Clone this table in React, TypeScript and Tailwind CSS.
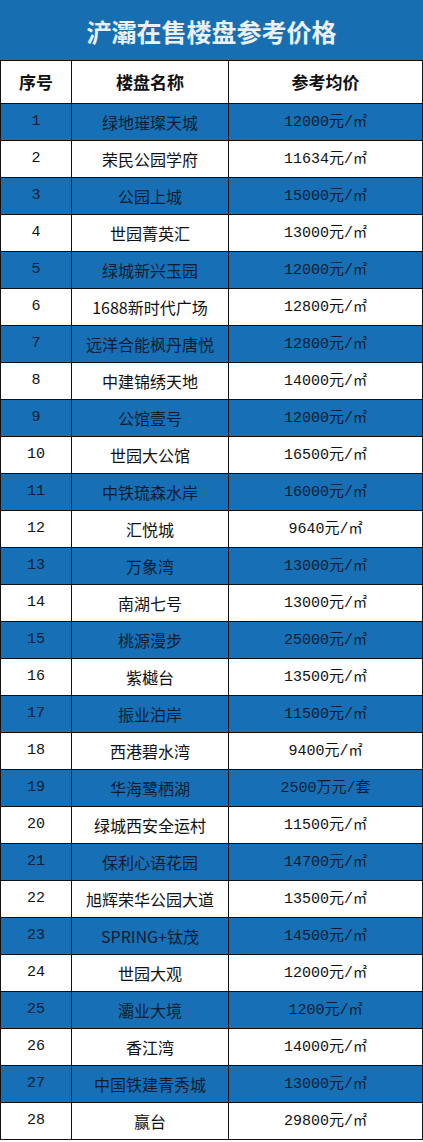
import React from "react";

type Row = [string, string, string];

const rows: Row[] = [
  ["1", "绿地璀璨天城", "12000"],
  ["2", "荣民公园学府", "11634"],
  ["3", "公园上城", "15000"],
  ["4", "世园菁英汇", "13000"],
  ["5", "绿城新兴玉园", "12000"],
  ["6", "1688新时代广场", "12800"],
  ["7", "远洋合能枫丹唐悦", "12800"],
  ["8", "中建锦绣天地", "14000"],
  ["9", "公馆壹号", "12000"],
  ["10", "世园大公馆", "16500"],
  ["11", "中铁琉森水岸", "16000"],
  ["12", "汇悦城", "9640"],
  ["13", "万象湾", "13000"],
  ["14", "南湖七号", "13000"],
  ["15", "桃源漫步", "25000"],
  ["16", "紫樾台", "13500"],
  ["17", "振业泊岸", "11500"],
  ["18", "西港碧水湾", "9400"],
  ["19", "华海鹭栖湖", "SET"],
  ["20", "绿城西安全运村", "11500"],
  ["21", "保利心语花园", "14700"],
  ["22", "旭辉荣华公园大道", "13500"],
  ["23", "SPRING+钛茂", "14500"],
  ["24", "世园大观", "12000"],
  ["25", "灞业大境", "1200"],
  ["26", "香江湾", "14000"],
  ["27", "中国铁建青秀城", "13000"],
  ["28", "赢台", "29800"],
];

const mono = "font-['Liberation_Mono','Noto_Sans_CJK_SC',monospace]";
const cjk = "font-['Noto_Sans_CJK_SC',sans-serif]";

function Price({ v }: { v: string }) {
  if (v === "SET") {
    return (
      <span className="inline-flex items-baseline">
        <span className={`${mono} text-[15px]`}>2500</span>
        <span className={`${cjk} text-[15px]`}>万元</span>
        <span className={`${mono} text-[15px]`}>/</span>
        <span className={`${cjk} text-[15px]`}>套</span>
      </span>
    );
  }
  return (
    <span className="inline-flex items-baseline">
      <span className={`${mono} text-[15px]`}>{v}</span>
      <span className={`${cjk} text-[15px]`}>元</span>
      <span className={`${mono} text-[15px]`}>/</span>
      <span className={`${cjk} text-[14px]`}>㎡</span>
    </span>
  );
}

export default function App() {
  return (
    <div className="w-[423px] bg-white">
      <div className="h-[60px] bg-[#176fb2] flex items-center justify-center pt-[4px]">
        <h1 className={`${cjk} text-[25px] font-bold text-[#e9f0f6] tracking-[0px]`}>
          浐灞在售楼盘参考价格
        </h1>
      </div>
      <div className="border-l border-r border-[#111]">
        <div className="grid grid-cols-[71px_157px_1fr] h-[44px] border-t border-b border-[#111] bg-white text-[#111]">
          <div className={`${cjk} flex items-center justify-center text-[17px] font-bold border-r border-[#111]`}>序号</div>
          <div className={`${cjk} flex items-center justify-center text-[17px] font-bold border-r border-[#111]`}>楼盘名称</div>
          <div className={`${cjk} flex items-center justify-center text-[17px] font-bold`}>参考均价</div>
        </div>
        {rows.map((r, i) => {
          const blue = i % 2 === 0;
          return (
            <div
              key={r[0]}
              className={`grid grid-cols-[71px_157px_1fr] h-[37px] border-b border-[#111] ${
                blue ? "bg-[#176fb5] text-[#0c1d33]" : "bg-white text-[#111]"
              }`}
            >
              <div className={`${mono} flex items-center justify-center text-[15px] border-r border-[#111]`}>{r[0]}</div>
              <div className={`${cjk} flex items-center justify-center text-[16px] border-r border-[#111]`}>
                {r[1]}
              </div>
              <div className="flex items-center justify-center">
                <Price v={r[2]} />
              </div>
            </div>
          );
        })}
      </div>
    </div>
  );
}
